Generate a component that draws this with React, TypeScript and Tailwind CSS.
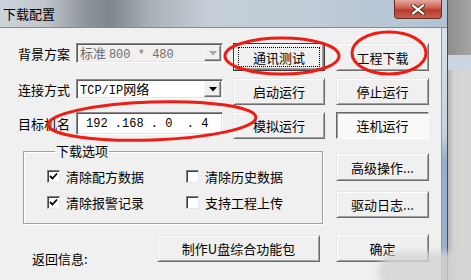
import type { ReactNode } from "react";
import clsx from "clsx";

const font = "font-['Noto_Sans_CJK_SC','Noto_Sans',sans-serif]";
const mono = "font-['Liberation_Mono',monospace] text-[12px]";

function Btn({ children, className, isDefault, pressed }: { children: ReactNode; className?: string; isDefault?: boolean; pressed?: boolean }) {
  if (pressed) {
    return (
      <div className={clsx("flex items-center justify-center border border-t-[#696969] border-l-[#696969] border-r-white border-b-white bg-[#f9f9f9] shadow-[inset_1px_1px_0_#a0a0a0] text-[13px] leading-none", className)}>
        {children}
      </div>
    );
  }
  return (
    <div
      className={clsx(
        "flex items-center justify-center bg-[#f0f0f0] text-[13px] leading-none",
        isDefault
          ? "border border-[#3c3c3c] shadow-[inset_1px_1px_0_#fff,inset_-1px_-1px_0_#808080,inset_-2px_-2px_0_#a0a0a0]"
          : "border border-t-[#e6e6e6] border-l-[#e6e6e6] border-r-[#6d6d6d] border-b-[#6d6d6d] shadow-[inset_1px_1px_0_#fff,inset_-1px_-1px_0_#a0a0a0]",
        className
      )}
    >
      {isDefault ? (
        <div className="flex h-[20px] w-[82px] items-center justify-center border border-dotted border-black">{children}</div>
      ) : (
        children
      )}
    </div>
  );
}

function Arrow({ disabled }: { disabled?: boolean }) {
  return (
    <div className="flex h-full w-[17px] items-center justify-center border border-t-[#f4f4f4] border-l-[#f4f4f4] border-r-[#6d6d6d] border-b-[#6d6d6d] bg-[#f0f0f0] shadow-[inset_-1px_-1px_0_#a0a0a0]">
      <svg width="8" height="5" viewBox="0 0 8 5">
        <path d="M0 0h8L4 4.5z" fill={disabled ? "#a8a8a8" : "#000"} />
      </svg>
    </div>
  );
}

function Check({ checked, label }: { checked?: boolean; label: string }) {
  return (
    <div className="flex items-center gap-[6px]">
      <div className="flex h-[13px] w-[13px] items-center justify-center border border-t-[#808080] border-l-[#808080] border-r-[#e8e8e8] border-b-[#e8e8e8] bg-white shadow-[inset_1px_1px_0_#404040]">
        {checked && (
          <svg width="9" height="9" viewBox="0 0 9 9">
            <path d="M1 4l2.5 2.5L8 1.5" stroke="#000" strokeWidth="1.8" fill="none" />
          </svg>
        )}
      </div>
      <span className="text-[13px] leading-none">{label}</span>
    </div>
  );
}

const sunken = "border border-t-[#8a8a8a] border-l-[#8a8a8a] border-r-white border-b-white shadow-[inset_1px_1px_0_#5a5a5a,inset_-1px_-1px_0_#e3e3e3]";

export default function App() {
  return (
    <div className={clsx("relative flex h-[280px] w-[471px] overflow-hidden bg-[#c8c8c8] text-black", font)}>
      {/* window */}
      <div className="flex w-[447px] flex-col">
        <div className="relative flex h-[28px] shrink-0 items-center border-b border-[#7f8c99] bg-[linear-gradient(to_right,#cdd4db_0,#c0c6cb_45px,#8f969b_85px,#7f878c_110px,#a9b1b7_150px,#c6cfd8_210px,#bfcbd6_320px,#b1c3d4_447px)] pl-[3px]">
          <span className="text-[13px] leading-none">下载配置</span>
          <div className="ml-auto mr-[5px] flex h-[19px] w-[48px] items-center justify-center self-start rounded-b-[4px] border border-t-0 border-[#6b2c24] bg-[linear-gradient(to_bottom,#e7aaa0,#cf5c4c_45%,#b8392a_55%,#c9604c)]">
            <svg width="14" height="11" viewBox="0 0 14 11">
              <path d="M2 1.5l10 8M12 1.5l-10 8" stroke="#4a2a26" strokeWidth="4" strokeLinecap="square" />
              <path d="M2 1.5l10 8M12 1.5l-10 8" stroke="#fff" strokeWidth="2.2" strokeLinecap="square" />
            </svg>
          </div>
        </div>
        <div className="flex flex-1">
          <div className="w-[441px] bg-[#f0f0f0] pl-[18px] pt-[15px]">
            {/* top block */}
            <div className="flex">
              <div className="flex w-[215px] flex-col">
                <div className="flex h-[20px] items-center">
                  <span className="w-[58px] text-[13px] leading-none">背景方案</span>
                  <div className={clsx("flex h-[20px] w-[147px] items-center bg-[#f0f0f0] pl-[3px] pr-[1px] py-[1px] text-[#6d6d6d]", sunken)}>
                    <span className="flex-1 whitespace-pre text-[13px] leading-none">
                      标准 <span className={mono}>800 * 480</span>
                    </span>
                    <Arrow disabled />
                  </div>
                </div>
                <div className="mt-[16px] flex h-[20px] items-center">
                  <span className="w-[58px] text-[13px] leading-none">连接方式</span>
                  <div className={clsx("flex h-[20px] w-[147px] items-center bg-white pl-[3px] pr-[1px] py-[1px]", sunken)}>
                    <span className="flex-1 text-[13px] leading-none">
                      <span className={mono}>TCP/IP</span>网络
                    </span>
                    <Arrow />
                  </div>
                </div>
                <div className="mt-[13px] flex h-[23px] items-center">
                  <span className="w-[58px] text-[13px] leading-none">目标机名</span>
                  <div className={clsx("flex h-[23px] w-[147px] items-center bg-white pl-[9px]", sunken)}>
                    <span className="whitespace-pre font-['Liberation_Mono',monospace] text-[12px]">192 .168 . 0  . 4</span>
                  </div>
                </div>
              </div>
              <div className="flex w-[92px] flex-col gap-[7px]">
                <Btn isDefault className="h-[28px]">通讯测试</Btn>
                <Btn className="h-[27px]">启动运行</Btn>
                <Btn className="h-[27px]">模拟运行</Btn>
              </div>
              <div className="ml-[11px] flex w-[93px] flex-col gap-[7px]">
                <Btn className="h-[28px]">工程下载</Btn>
                <Btn className="h-[27px]">停止运行</Btn>
                <Btn pressed className="h-[27px]">连机运行</Btn>
              </div>
            </div>

            {/* options group */}
            <div className="mt-[3px] flex">
              <fieldset className="ml-[5px] h-[82px] w-[300px] border border-[#a0a0a0] pl-[23px] pt-[10px] shadow-[1px_1px_0_#fff,inset_1px_1px_0_#fff]">
                <legend className="ml-[8px] px-[1px] text-[13px] leading-[18px]">下载选项</legend>
                <div className="grid grid-cols-[139px_1fr] gap-y-[13px]">
                  <Check checked label="清除配方数据" />
                  <Check label="清除历史数据" />
                  <Check checked label="清除报警记录" />
                  <Check label="支持工程上传" />
                </div>
              </fieldset>
              <div className="ml-[13px] mt-[11px] flex w-[93px] flex-col gap-[10px]">
                <Btn className="h-[28px]">高级操作...</Btn>
                <Btn className="h-[27px]">驱动日志...</Btn>
              </div>
            </div>

            {/* bottom row */}
            <div className="mt-[10px] flex items-start">
              <span className="ml-[14px] mt-[18px] w-[125px] text-[13px] leading-none">返回信息:</span>
              <Btn className="mt-[1px] h-[27px] w-[163px]">制作U盘综合功能包</Btn>
              <Btn className="ml-[16px] h-[28px] w-[93px]">确定</Btn>
            </div>
            <div className="ml-[2px] mt-[16px] h-[10px] w-[412px] border-l border-t border-[#8a8a8a] bg-white shadow-[inset_1px_1px_0_#5a5a5a]" />
          </div>
          <div className="w-[6px] border-l border-[#8b9aa8] bg-[linear-gradient(to_bottom,#d7e1ea,#c5d3e0_40%,#97afca_50%,#9ab3cd)]" />
        </div>
      </div>
      {/* desktop behind */}
      <div className="flex flex-1 flex-col border-l border-[#4a4a4a]">
        <div className="h-[55px] bg-[linear-gradient(to_right,#8e8e8e,#a6a6a6)]" />
        <div className="h-[15px] bg-[#cbd5de]" />
        <div className="flex-1 bg-[linear-gradient(to_right,#b4b4b4,#d4d4d4_6px,#d6d6d6)]" />
      </div>

      {/* annotation marks */}
      <svg className="pointer-events-none absolute left-0 top-0" width="471" height="280" viewBox="0 0 471 280">
        <ellipse cx="282" cy="56" rx="57" ry="18" fill="none" stroke="#ee1c14" strokeWidth="3" />
        <ellipse cx="389" cy="53" rx="37" ry="21" fill="none" stroke="#ee1c14" strokeWidth="3" />
        <ellipse cx="152" cy="121" rx="104" ry="19" fill="none" stroke="#ee1c14" strokeWidth="3" transform="rotate(-2 152 121)" />
      </svg>
      <div className="pointer-events-none absolute left-[378px] top-[252px] h-[40px] w-[100px] rounded-full bg-[#d4d4d4] opacity-80 blur-[3px]" />
    </div>
  );
}
